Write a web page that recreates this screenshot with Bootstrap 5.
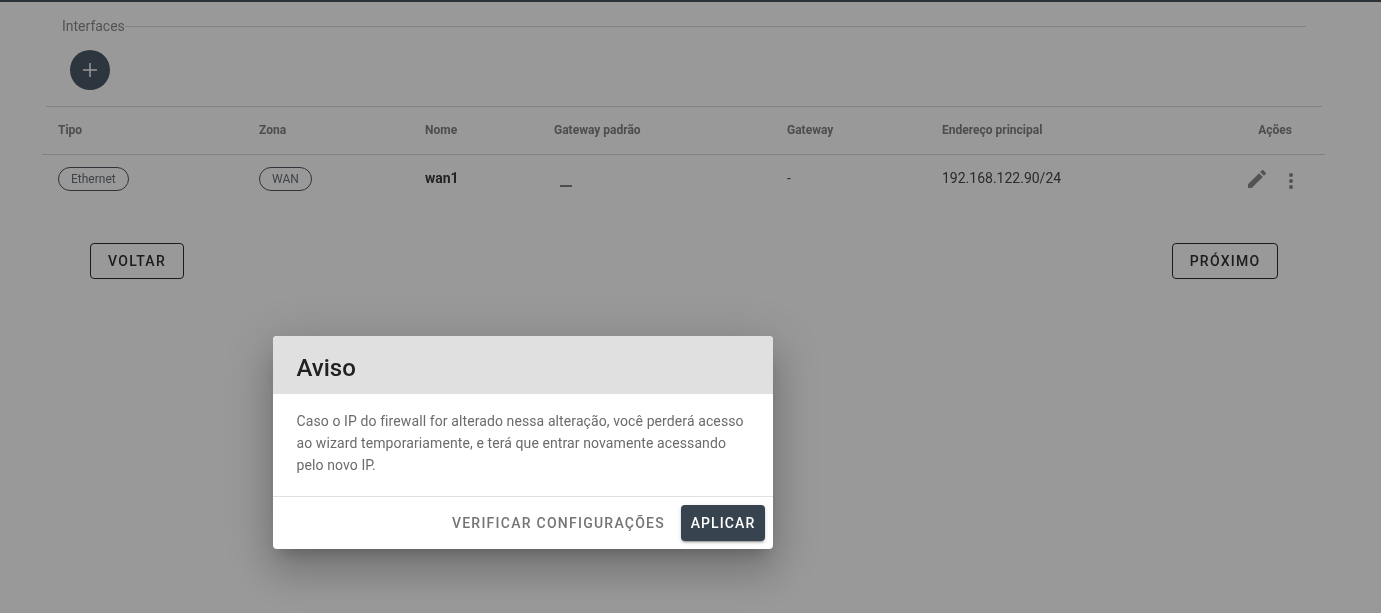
<!DOCTYPE html>
<html lang="pt-BR">
<head>
  <meta charset="utf-8">
  <title>Wizard - Interfaces</title>
  <link href="https://cdn.jsdelivr.net/npm/bootstrap@5.3.0/dist/css/bootstrap.min.css" rel="stylesheet">
  <style>
    html, body { height: 100%; }
    body { font-family: Roboto, "Liberation Sans", sans-serif; background: #fff; color: #212121; overflow: hidden; }
    .top-line { height: 2px; background: #46525c; }

    .page-wrap { padding: 0 56px 0 42px; will-change: transform; }
    .legend-row { padding: 15px 19px 0 20px; font-size: 14px; line-height: 19px; color: #8a8a8a; }
    .legend-row hr { flex: 1; margin: 0; border: 0; border-top: 1px solid #d8d8d8; opacity: 1; }
    .add-btn { width: 40px; height: 40px; margin: 14px 0 16px 28px; padding: 0; border: 0; border-radius: 50%; background: #4b5a68; }

    .iface-table { width: 1283px; margin: 0; table-layout: fixed; font-size: 14px; color: #424242; background: transparent; }
    .iface-table th { height: 47px; padding: 0 0 1px 16px; font-size: 12px; font-weight: 700; color: #808080; vertical-align: middle; border-bottom: 1px solid #d8d8d8; }
    .iface-table td { height: 49px; padding: 0 0 0 16px; vertical-align: middle; border-bottom: 0; color: #484848; }
    .iface-table td.wan-name { color: #3a3a3a; }
    .head-rule { height: 1px; margin: 0 3px 0 4px; background: #d8d8d8; }
    .pill-tag { display: inline-block; height: 24px; padding: 0 12px; border: 1px solid #4b555e; border-radius: 12px; font-size: 12px; line-height: 23px; color: #667078; }
    .gw-dash { display: inline-block; width: 12px; height: 2px; margin: 20px 0 0 6px; background: #808080; }
    .row-icons { gap: 20px; padding-right: 32px; }
    .dots-icon { margin-top: 4px; }

    .nav-row { padding: 40px 47px 0 48px; }
    .line-btn { height: 36px; padding: 0; border: 1px solid #2e2e2e; border-radius: 4px; background: transparent; font-size: 14px; font-weight: 500; letter-spacing: 1.25px; line-height: 34px; color: #303030; }
    .btn-back { width: 94px; }
    .btn-next { width: 106px; }

    .dim-layer { position: fixed; inset: 0; background: rgba(0, 0, 0, .4); }
    .warn-dialog { position: absolute; left: 273px; top: 336px; width: 500px; border-radius: 4px; overflow: hidden; background: #fff; will-change: transform;
      box-shadow: 0 11px 15px -7px rgba(0,0,0,.2), 0 24px 38px 3px rgba(0,0,0,.14), 0 9px 46px 8px rgba(0,0,0,.12); }
    .warn-head { height: 58px; padding: 0 23.5px; background: #e0e0e0; font-size: 24px; font-weight: 500; line-height: 64px; color: #212121; }
    .warn-body { padding: 16px 23px 20px 23.5px; font-size: 14px; line-height: 22px; letter-spacing: .1px; color: #6b6b6b; border-bottom: 1px solid #e0e0e0; }
    .warn-actions { height: 52px; padding: 0 8px 0 0; gap: 8px; }
    .act-text { height: 36px; padding: 0 8px; border: 0; background: transparent; font-size: 14px; font-weight: 500; letter-spacing: 1.25px; color: #757575; }
    .act-main { width: 84px; height: 36px; padding: 0; border: 0; border-radius: 4px; background: #37444f; font-size: 14px; font-weight: 500; letter-spacing: 1.1px; color: #fff;
      box-shadow: 0 3px 1px -2px rgba(0,0,0,.2), 0 2px 2px 0 rgba(0,0,0,.14), 0 1px 5px 0 rgba(0,0,0,.12); }
  </style>
</head>
<body>
<div class="top-line"></div>

<div class="page-wrap">
  <!-- Interfaces legend -->
  <div class="legend-row d-flex align-items-center">
    <span>Interfaces</span>
    <hr>
  </div>

  <button class="add-btn d-flex align-items-center justify-content-center" aria-label="Adicionar">
    <svg width="24" height="24" viewBox="0 0 24 24" fill="#fff"><path d="M19 12.75h-6.25V19h-1.5v-6.25H5v-1.5h6.25V5h1.5v6.25H19v1.5z"/></svg>
  </button>

  <div class="head-rule"></div>
  <table class="table iface-table">
    <colgroup>
      <col style="width: 201px"><col style="width: 166px"><col style="width: 129px"><col style="width: 233px"><col style="width: 155px"><col style="width: 200px"><col>
    </colgroup>
    <thead>
      <tr>
        <th>Tipo</th>
        <th>Zona</th>
        <th>Nome</th>
        <th>Gateway padrão</th>
        <th>Gateway</th>
        <th>Endereço principal</th>
        <th class="text-end pe-4 ps-0"><span class="d-inline-block" style="padding-right: 9px">Ações</span></th>
      </tr>
    </thead>
    <tbody>
      <tr>
        <td><span class="pill-tag">Ethernet</span></td>
        <td><span class="pill-tag">WAN</span></td>
        <td class="fw-bold wan-name">wan1</td>
        <td><span class="gw-dash"></span></td>
        <td>-</td>
        <td>192.168.122.90/24</td>
        <td>
          <div class="d-flex justify-content-end align-items-center row-icons">
            <svg width="24" height="24" viewBox="0 0 24 24" fill="#8a8a8a"><path d="M3 17.25V21h3.75L17.81 9.94l-3.75-3.75L3 17.25zM20.71 7.04a1 1 0 0 0 0-1.41l-2.34-2.34a1 1 0 0 0-1.41 0l-1.83 1.83 3.75 3.75 1.83-1.83z"/></svg>
            <svg class="dots-icon" width="4" height="16" viewBox="0 0 4 16" fill="#8a8a8a"><circle cx="2" cy="2" r="2"/><circle cx="2" cy="8" r="2"/><circle cx="2" cy="14" r="2"/></svg>
          </div>
        </td>
      </tr>
    </tbody>
  </table>

  <div class="nav-row d-flex justify-content-between">
    <button class="line-btn btn-back">VOLTAR</button>
    <button class="line-btn btn-next">PRÓXIMO</button>
  </div>
</div>

<!-- Dialog over the dimmed page -->
<div class="dim-layer">
  <div class="warn-dialog">
    <div class="warn-head">Aviso</div>
    <div class="warn-body">Caso o IP do firewall for alterado nessa alteração, você perderá acesso ao wizard temporariamente, e terá que entrar novamente acessando pelo novo IP.</div>
    <div class="warn-actions d-flex justify-content-end align-items-center">
      <button class="act-text">VERIFICAR CONFIGURAÇÕES</button>
      <button class="act-main">APLICAR</button>
    </div>
  </div>
</div>
</body>
</html>
